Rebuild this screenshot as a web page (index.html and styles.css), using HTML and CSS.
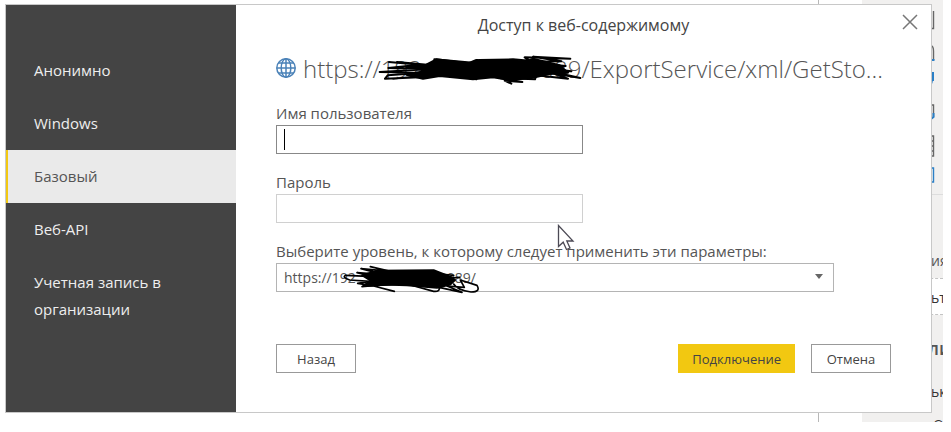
FILE: index.html
```html
<!DOCTYPE html>
<html lang="ru">
<head>
<meta charset="utf-8">
<title>Доступ к веб-содержимому</title>
<link rel="stylesheet" href="styles.css">
</head>
<body>
<div class="stage">
  <div class="workspace">
    <div class="canvas"></div>
    <aside class="panel">
      <div class="visuals">
        <svg width="12" height="194" viewBox="0 0 12 194" fill="none" aria-hidden="true">
          <g stroke="#666" stroke-width="1.4">
            <path d="M2.5 11v17.500H0M0 46q2.500 0 2.500 5v9M0 105h2.500v12M0 136h2.500v20H0M0 141h2M0 146h2M0 151h2"/>
          </g>
          <g stroke="#2b7fc6" stroke-width="2">
            <path d="M0 60h3.500M0 73h2v7H0M0 84l1-3M2.500 113v4L0 119"/>
            <path d="M0 168h2.500v14H0" stroke-width="1.400"/>
          </g>
        </svg>
      </div>
      <div class="values">ия</div>
      <div class="dropzone">ьт</div>
      <div class="drill">ли</div>
      <div class="option">ьк</div>
      <div class="toggle">О</div>
    </aside>
  </div>

  <section class="dialog" role="dialog" aria-labelledby="title">
    <nav class="side">
      <a class="side-item" href="#">Анонимно</a>
      <a class="side-item" href="#">Windows</a>
      <a class="side-item selected" href="#" aria-current="page">Базовый</a>
      <a class="side-item" href="#">Веб-API</a>
      <a class="side-item" href="#">Учетная запись в организации</a>
    </nav>
    <form class="main">
      <h1 class="title" id="title">Доступ к веб-содержимому</h1>
      <button class="close" type="button" aria-label="Закрыть">
        <svg width="16" height="16" viewBox="0 0 16 16" stroke="#777" stroke-width="1.500"><path d="M1 1l14 14M15 1L1 15"/></svg>
      </button>

      <div class="address">
        <svg class="globe" width="22" height="22" viewBox="0 0 22 22" fill="none" stroke="#4b82b8" stroke-width="1.500" aria-hidden="true">
          <circle cx="10" cy="10" r="9.200"/>
          <ellipse cx="10" cy="10" rx="4.800" ry="9.200"/>
          <path d="M10 .8v18.400M.8 10h18.400M2.500 5h15M2.500 15h15"/>
        </svg>
        <span class="url">https://192&nbsp;&nbsp;&nbsp;&nbsp;&nbsp;&nbsp;&nbsp;&nbsp;&nbsp;&nbsp;&nbsp;&nbsp;&nbsp;&nbsp;&nbsp;&nbsp;&nbsp;&nbsp;&nbsp;089/ExportService/xml/GetSto...</span>
        <svg class="scribble scribble-url" width="204" height="30" viewBox="355 165 612 90" fill="none" stroke="#000" stroke-width="6" stroke-linecap="round" stroke-linejoin="round" aria-hidden="true">
          <path fill="#000" d="M500 194L530 178L625 190L650 180L800 184L820 176L900 196L925 218L870 222L815 234L750 240L700 232L640 238L540 228L490 236L440 224L500 212L450 202Z"/>
          <path d="M388 186L480 194L386 204L500 208L360 216L490 218L384 226L376 236L480 232L520 220M412 186L520 196L440 200M524 178L640 188L523 188M640 196L660 180L760 178L810 182L795 172L932 176L820 170L905 184L790 186L918 198L840 202L935 214L870 214L962 234L880 220L925 236L830 226L826 238L720 234L788 246L735 242L755 251M400 236L560 222L650 238"/>
        </svg>
      </div>

      <div class="field">
        <label for="user">Имя пользователя</label>
        <div class="caret-box"><input class="box active" id="user" type="text"></div>
      </div>
      <div class="field">
        <label for="pass">Пароль</label>
        <input class="box" id="pass" type="password">
      </div>
      <div class="field level">
        <label for="level">Выберите уровень, к которому следует применить эти параметры:</label>
        <select class="box wide" id="level">
          <option>https://192&nbsp;&nbsp;&nbsp;&nbsp;&nbsp;&nbsp;&nbsp;&nbsp;&nbsp;&nbsp;&nbsp;&nbsp;&nbsp;&nbsp;&nbsp;&nbsp;&nbsp;&nbsp;&nbsp;&nbsp;&nbsp;&nbsp;&nbsp;&nbsp;&nbsp;089/</option>
        </select>
        <svg class="arrow" width="8" height="5" viewBox="0 0 8 5" aria-hidden="true"><path d="M0 0h8L4 5z" fill="#666"/></svg>
        <svg class="scribble scribble-level" width="138" height="30" viewBox="245 340 414 90" fill="none" stroke="#000" stroke-width="5" stroke-linecap="round" stroke-linejoin="round" aria-hidden="true">
          <path fill="#000" d="M305 374L350 360L520 358L560 374L585 388L570 402L530 412L440 404L370 402L305 408L330 390Z"/>
          <path d="M330 348L390 362L302 354L370 372L290 366L340 378L256 374Q244 380 268 388L330 392L292 398L340 406L402 422M322 406L440 400L520 422Q540 424 536 410L605 425L560 406L612 410L600 388L650 404Q662 424 632 424Q590 418 580 400M540 370L580 374L550 384L598 380"/>
        </svg>
        <svg class="pointer" width="18" height="27" viewBox="0 0 18 27" fill="#fff" stroke="#4c4a55" stroke-width="1.300" aria-hidden="true"><path d="M1.500 1.500v21l4.700-4.300 3.300 7.300 3.500-1.500-3.200-7H16z"/></svg>
      </div>

      <div class="actions">
        <button class="btn back" type="button">Назад</button>
        <button class="btn primary" type="submit">Подключение</button>
        <button class="btn" type="button">Отмена</button>
      </div>
    </form>
  </section>
</div>
</body>
</html>
```
FILE: styles.css
```css
* {
  box-sizing: border-box;
}

body {
  margin: 0;
  background: #fff;
  color: #555;
  font: 15px/20px "Open Sans", "Noto Sans", sans-serif;
}

.stage {
  display: grid;
  margin-right: 8px;
  overflow: hidden;
}

.workspace,
.dialog {
  grid-area: 1 / 1;
}

/* Report canvas and visualizations pane behind the dialog */
.workspace {
  display: flex;
  min-width: 0;
  height: 422px;
  overflow: hidden;
}

.canvas {
  flex: 1;
  margin-right: 43px;
  border-right: 1px solid #b8b8b8;
}

.panel {
  width: 81px;
  background: #f1f0ef;
  font-size: 14px;
  white-space: nowrap;
  overflow: hidden;
}

.panel > div {
  padding-left: 69px;
}

.panel .visuals {
  height: 195px;
  border-bottom: 1px solid #ddd;
}

.visuals svg {
  display: block;
}

.panel .values {
  padding-top: 56px;
  height: 83px;
}

.panel .dropzone {
  height: 37px;
  line-height: 38px;
  background: #fff;
  border: dashed #c4c4c4;
  border-width: 1px 0;
  color: #333;
}

.panel .drill {
  padding-left: 66px;
  height: 68px;
  line-height: 66px;
  font-size: 18px;
  font-weight: 600;
}

.option {
  line-height: 18px;
  color: #333;
}

.panel .toggle {
  padding-top: 14px;
  padding-left: 71px;
  color: #333;
}

/* Dialog */
.dialog {
  display: flex;
  min-width: 0;
  margin: 4px 11px 10px 5px;
  border: 1px solid #c8c8c8;
  background: #fff;
}

.side {
  flex: none;
  width: 230px;
  padding-top: 39px;
  background: #444;
}

.side-item {
  display: block;
  padding: 13px 56px 13px 28px;
  color: #eee;
  line-height: 27px;
  text-decoration: none;
}

.side-item.selected {
  padding-left: 26px;
  border-left: 2px solid #f2c811;
  background: #eaeaea;
  color: #555;
}

.main {
  position: relative;
  flex: 1;
  min-width: 0;
  padding: 10px 40px 39px 40px;
}

.title {
  margin: 0;
  font-size: 16px;
  font-weight: 400;
  line-height: 20px;
  text-align: center;
  color: #444;
}

.close {
  position: absolute;
  top: 9px;
  right: 13px;
  padding: 0;
  border: 0;
  background: none;
}

.close svg {
  display: block;
}

.address {
  position: relative;
  display: flex;
  align-items: center;
  height: 50px;
  margin: 9px 0;
}

.globe {
  flex: none;
  margin-right: 5px;
}

.url {
  overflow: hidden;
  font-size: 24px;
  font-weight: 300;
  line-height: 36px;
  white-space: nowrap;
}

.scribble {
  position: absolute;
  pointer-events: none;
}

.scribble-url {
  left: 102px;
  top: 11px;
}

.field {
  position: relative;
  display: flex;
  flex-direction: column;
  margin-bottom: 18px;
}

.field label {
  margin-bottom: 2px;
}

.caret-box {
  position: relative;
  display: flex;
}

.caret-box::after {
  content: "";
  position: absolute;
  top: 4px;
  left: 8px;
  width: 1px;
  height: 21px;
  background: #000;
}

.box {
  width: 307px;
  max-width: 100%;
  height: 29px;
  padding: 0 7px;
  border: 1px solid #d0d0d0;
  background: #fff;
  color: #555;
  font: inherit;
  font-size: 14px;
}

.box.active {
  border-color: #888;
}

.box.wide {
  width: 558px;
  border-color: #b4b4b4;
  appearance: none;
}

.arrow {
  position: absolute;
  left: 539px;
  bottom: 13px;
}

.scribble-level {
  left: 66px;
  bottom: -2px;
}

.pointer {
  position: absolute;
  left: 281px;
  top: -17px;
}

.actions {
  display: flex;
  gap: 16px;
  margin-top: 52px;
}

.btn {
  height: 29px;
  min-width: 80px;
  padding: 0 13px;
  border: 1px solid #999;
  background: #fff;
  color: #444;
  font: inherit;
  font-size: 13px;
}

.back {
  margin-right: auto;
}

.primary {
  border-color: #f2c811;
  background: #f2c811;
}
```
